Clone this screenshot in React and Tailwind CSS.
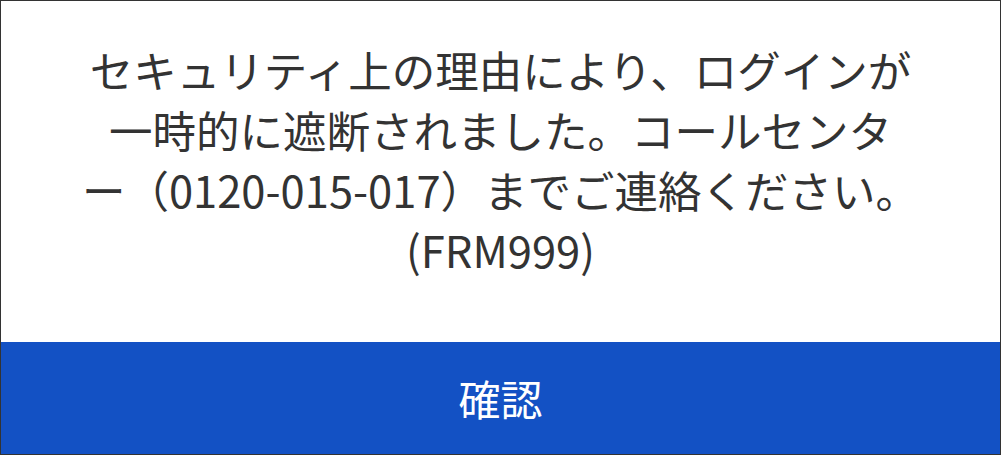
export default function App() {
  return (
    <div className="w-[1001px] h-[455px] border border-[#333333] bg-white flex flex-col overflow-hidden">
      <div className="flex-1 pt-[39px] text-center text-[#333333] text-[43.5px] leading-[60px] [font-family:'Noto_Sans_CJK_JP',sans-serif]">
        <p>
          セキュリティ上の理由により、ログインが
          <br />
          一時的に遮断されました。コールセンタ
          <br />
          ー（0120-015-017）までご連絡ください。
          <br />
          (FRM999)
        </p>
      </div>
      <button
        type="button"
        className="h-[112px] w-full bg-[#1351c4] text-white text-[42px] leading-none [font-family:'Noto_Sans_CJK_JP',sans-serif]"
      >
        確認
      </button>
    </div>
  );
}
